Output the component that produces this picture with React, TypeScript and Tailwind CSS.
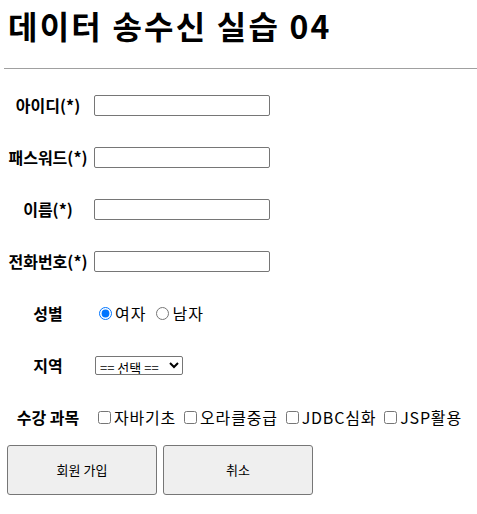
import React from "react";

const Row = ({ label, children }: { label: string; children: React.ReactNode }) => (
  <div className="flex h-[52px] items-center">
    <div className="w-[84px] ml-[6px] text-center font-bold text-[16px] whitespace-nowrap">{label}</div>
    <div className="ml-[4px] flex items-center whitespace-nowrap">{children}</div>
  </div>
);

const TextInput = ({ type = "text" }: { type?: string }) => (
  <input
    type={type}
    className="w-[176px] h-[21px] border border-[#767676] rounded-[2px] px-[2px] text-[13px] bg-white"
  />
);

export default function App() {
  return (
    <div
      className="w-[477px] h-[514px] bg-white text-black"
      style={{ fontFamily: '"Noto Sans CJK KR", "Noto Sans", sans-serif' }}
    >
      <h1 className="pt-[5px] pl-[8px] text-[32px] leading-[40px] font-bold tracking-[2.2px]">데이터 송수신 실습 04</h1>
      <div className="mt-[23px] ml-[4px] border-t border-[#a0a0a0]" />
      <div className="mt-[10px]">
        <Row label="아이디(*)">
          <TextInput />
        </Row>
        <Row label="패스워드(*)">
          <TextInput type="password" />
        </Row>
        <Row label="이름(*)">
          <TextInput />
        </Row>
        <Row label="전화번호(*)">
          <TextInput />
        </Row>
        <Row label="성별">
          <label className="flex items-center text-[16px] tracking-[1px]">
            <input type="radio" name="gender" defaultChecked className="w-[13px] h-[13px] ml-[5px] mr-[3px] accent-[#0075ff]" />
            여자
          </label>
          <label className="flex items-center text-[16px] tracking-[1px] ml-[5px]">
            <input type="radio" name="gender" className="w-[13px] h-[13px] ml-[5px] mr-[3px]" />
            남자
          </label>
        </Row>
        <Row label="지역">
          <select className="ml-[1px] w-[88px] h-[19px] border border-[#767676] rounded-[2px] text-[13px] leading-[15px] bg-white">
            <option>== 선택 ==</option>
            <option>서울</option>
            <option>부산</option>
          </select>
        </Row>
        <Row label="수강 과목">
          {["자바기초", "오라클중급", "JDBC심화", "JSP활용"].map((s, i) => (
            <label key={s} className={`flex items-center text-[16px] tracking-[0.8px] ${i > 0 ? "ml-[4px]" : ""}`}>
              <input type="checkbox" className="w-[13px] h-[13px] ml-[4px] mr-[3px]" />
              {s}
            </label>
          ))}
        </Row>
      </div>
      <div className="flex gap-[6px] ml-[7px] mt-[2px]">
        <button className="w-[150px] h-[50px] bg-[#efefef] border border-[#767676] rounded-[3px] text-[13px]">회원 가입</button>
        <button className="w-[150px] h-[50px] bg-[#efefef] border border-[#767676] rounded-[3px] text-[13px]">취소</button>
      </div>
    </div>
  );
}
